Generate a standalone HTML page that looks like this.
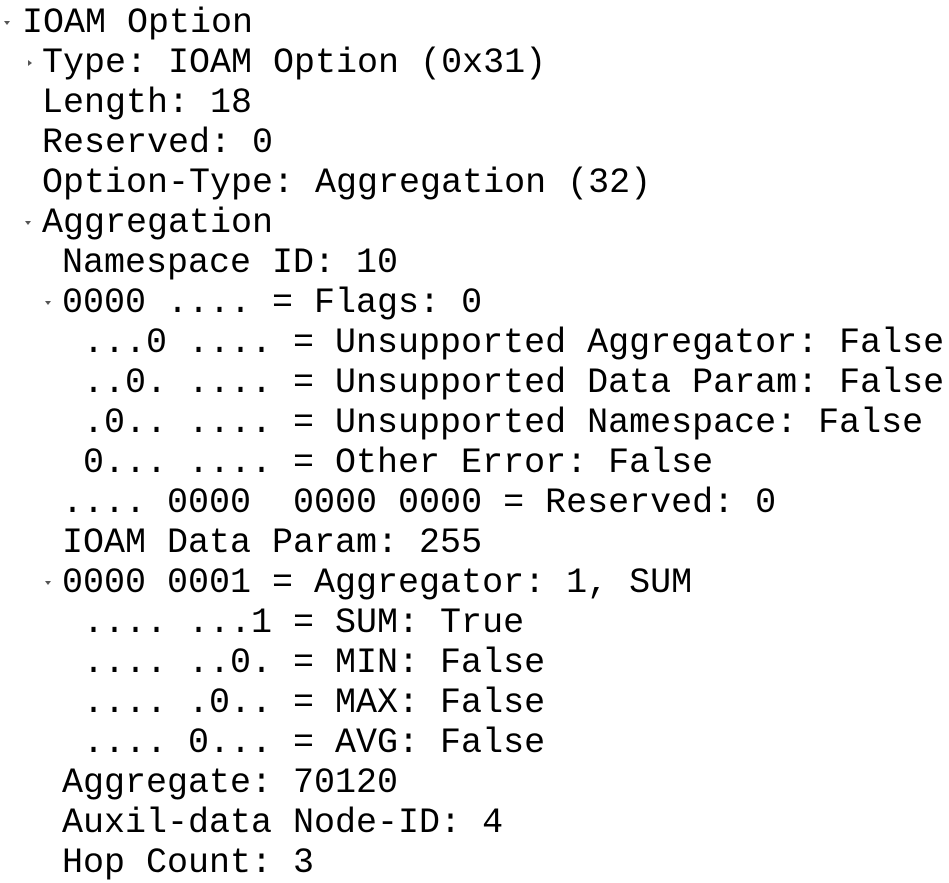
<!DOCTYPE html>
<html><head><meta charset="utf-8"><style>
body{margin:0;background:#fff;width:949px;height:882px;overflow:hidden;}
#w{position:absolute;left:-1px;top:3px;}
.l{position:absolute;left:0;height:40px;line-height:40px;font-family:"Liberation Mono",monospace;font-size:35px;color:#000;white-space:pre;}
.t{position:absolute;width:0;height:0;}
.d{border-left:3px solid transparent;border-right:3px solid transparent;border-top:4px solid #555;}
.r{border-top:3px solid transparent;border-bottom:3px solid transparent;border-left:4px solid #555;}
</style></head><body><div id="w">
<div class="t d" style="left:5px;top:18px"></div>
<div class="t r" style="left:29px;top:57px"></div>
<div class="t d" style="left:26px;top:218px"></div>
<div class="t d" style="left:46px;top:298px"></div>
<div class="t d" style="left:46px;top:578px"></div>
<div class="l" style="top:0;left:23px">IOAM Option</div>
<div class="l" style="top:40px;left:43px">Type: IOAM Option (0x31)</div>
<div class="l" style="top:80px;left:43px">Length: 18</div>
<div class="l" style="top:120px;left:43px">Reserved: 0</div>
<div class="l" style="top:160px;left:43px">Option-Type: Aggregation (32)</div>
<div class="l" style="top:200px;left:43px">Aggregation</div>
<div class="l" style="top:240px;left:63px">Namespace ID: 10</div>
<div class="l" style="top:280px;left:63px">0000 .... = Flags: 0</div>
<div class="l" style="top:320px;left:84px">...0 .... = Unsupported Aggregator: False</div>
<div class="l" style="top:360px;left:84px">..0. .... = Unsupported Data Param: False</div>
<div class="l" style="top:400px;left:84px">.0.. .... = Unsupported Namespace: False</div>
<div class="l" style="top:440px;left:84px">0... .... = Other Error: False</div>
<div class="l" style="top:480px;left:63px">.... 0000  0000 0000 = Reserved: 0</div>
<div class="l" style="top:520px;left:63px">IOAM Data Param: 255</div>
<div class="l" style="top:560px;left:63px">0000 0001 = Aggregator: 1, SUM</div>
<div class="l" style="top:600px;left:84px">.... ...1 = SUM: True</div>
<div class="l" style="top:640px;left:84px">.... ..0. = MIN: False</div>
<div class="l" style="top:680px;left:84px">.... .0.. = MAX: False</div>
<div class="l" style="top:720px;left:84px">.... 0... = AVG: False</div>
<div class="l" style="top:760px;left:63px">Aggregate: 70120</div>
<div class="l" style="top:800px;left:63px">Auxil-data Node-ID: 4</div>
<div class="l" style="top:840px;left:63px">Hop Count: 3</div>
</div></body></html>
